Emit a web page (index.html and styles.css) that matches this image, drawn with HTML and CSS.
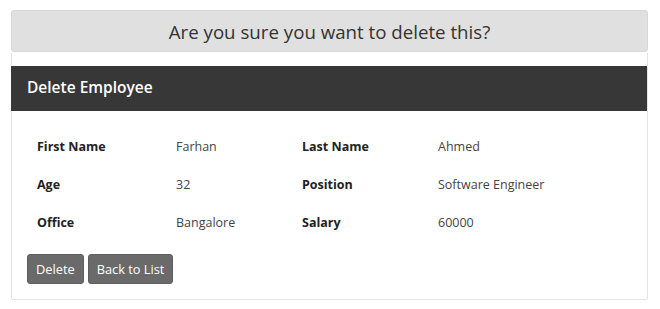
FILE: index.html
```html
<!DOCTYPE html>
<html lang="en">
<head>
  <meta charset="utf-8">
  <link rel="stylesheet" href="styles.css">
</head>
<body>

<div class="page">
  <div class="confirm">Are you sure you want to delete this?</div>

  <div class="card">
    <div class="card-head">Delete Employee</div>

    <div class="card-body">
      <div class="details">
        <div class="lbl">First Name</div>
        <div class="val">Farhan</div>
        <div class="lbl">Last Name</div>
        <div class="val">Ahmed</div>

        <div class="lbl">Age</div>
        <div class="val">32</div>
        <div class="lbl">Position</div>
        <div class="val">Software Engineer</div>

        <div class="lbl">Office</div>
        <div class="val">Bangalore</div>
        <div class="lbl">Salary</div>
        <div class="val">60000</div>
      </div>

      <div class="actions">
        <button class="btn">Delete</button>
        <button class="btn">Back to List</button>
      </div>
    </div>
  </div>
</div>

</body>
</html>
```

FILE: styles.css
```css
body {
  margin: 0;
  background-color: #fff;
  font-family: "Open Sans", "Noto Sans", sans-serif;
  color: #333;
  }

.page {
  width: 637px;
  margin: 10px 0 0 11px;
  }

.confirm {
  height: 42px;
  background-color: #e0e0e0;
  border: 1px solid #d8d8d8;
  border-radius: 3px;
  box-sizing: border-box;
  display: flex;
  justify-content: center;
  align-items: center;
  font-size: 18.7px;
  color: #333;
  }

.card {
  margin-top: 1px;
  padding-top: 13px;
  border: 1px solid #e4e4e4;
  border-top: none;
  border-radius: 0 0 3px 3px;
  }

.card-head {
  height: 45px;
  box-sizing: border-box;
  padding: 0 0 3px 16px;
  background-color: #373737;
  color: #fff;
  font-size: 15.5px;
  font-weight: 600;
  display: flex;
  align-items: center;
  margin-left: -1px;
  }

.card-body {
  padding: 16px 15px 15px 15px;
  }

.details {
  display: grid;
  grid-template-columns: 139px 126px 136px auto;
  grid-auto-rows: 38px;
  align-items: center;
  padding-left: 10px;
  font-size: 12.5px;
  }

.lbl {
  font-weight: 700;
  color: #222;
  }

.val {
  color: #444;
  }

.actions {
  display: flex;
  gap: 4px;
  margin-top: 13px;
  }

.btn {
  height: 30px;
  padding: 0 8px;
  background-color: #6a6a6a;
  color: #fff;
  border: 1px solid #5e5e5e;
  border-radius: 3px;
  font-family: inherit;
  font-size: 12.8px;
  }
```
